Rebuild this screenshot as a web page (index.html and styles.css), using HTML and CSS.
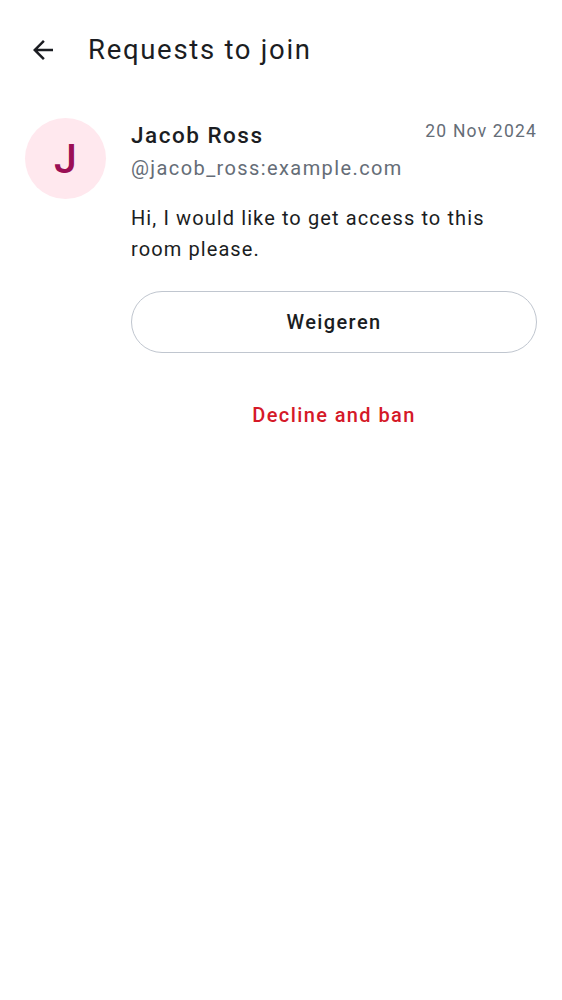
FILE: index.html
```html
<!DOCTYPE html>
<html lang="en">
<head>
<meta charset="utf-8">
<title>Requests to join</title>
<link rel="stylesheet" href="styles.css">
</head>
<body>
<header class="topbar">
  <button class="back" aria-label="Back">
    <svg width="30" height="30" viewBox="0 0 24 24"><path d="M20 11H7.83l5.59-5.59L12 4l-8 8 8 8 1.41-1.41L7.83 13H20v-2z" fill="#1b1d22"/></svg>
  </button>
  <h1 class="title">Requests to join</h1>
</header>
<main class="request">
  <div class="avatar">J</div>
  <div class="content">
    <div class="head">
      <div class="names">
        <div class="name">Jacob Ross</div>
        <div class="handle">@jacob_ross:example.com</div>
      </div>
      <div class="date">20 Nov 2024</div>
    </div>
    <p class="message">Hi, I would like to get access to this room please.</p>
    <button class="outline">Weigeren</button>
    <button class="danger">Decline and ban</button>
  </div>
</main>
</body>
</html>
```

FILE: styles.css
```css
* { box-sizing: border-box; }
html, body { margin: 0; padding: 0; background: #fff; }
body {
  font-family: Roboto, "Noto Sans", sans-serif;
  color: #1b1d22;
  width: 562px;
  height: 1000px;
}
.topbar {
  display: flex;
  align-items: center;
  height: 100px;
  padding: 0 0 0 28px;
}
.back {
  border: none;
  background: none;
  padding: 0;
  width: 30px;
  height: 30px;
  display: flex;
  margin-right: 30px;
}
.title {
  margin: 0;
  font-size: 27.5px;
  font-weight: 400;
  letter-spacing: 1.7px;
  line-height: 36px;
}
.request {
  display: flex;
  padding: 18px 25px 0 25px;
  gap: 25px;
}
.avatar {
  flex: none;
  width: 81px;
  height: 81px;
  border-radius: 50%;
  background: #ffe8ee;
  color: #9b0f55;
  font-size: 41px;
  font-weight: 500;
  display: flex;
  align-items: center;
  justify-content: center;
}
.content {
  flex: 1;
  display: flex;
  flex-direction: column;
}
.head {
  display: flex;
  justify-content: space-between;
  align-items: flex-start;
}
.name {
  font-size: 22.5px;
  font-weight: 500;
  line-height: 32px;
  letter-spacing: 1.5px;
  margin-top: 1px;
}
.handle {
  font-size: 20px;
  color: #656d77;
  line-height: 30px;
  margin-top: 2px;
  letter-spacing: 1.4px;
}
.date {
  font-size: 17.5px;
  color: #656d77;
  line-height: 26px;
  letter-spacing: 1.2px;
}
.message {
  margin: 20px 0 0 0;
  font-size: 20px;
  line-height: 31px;
  letter-spacing: 1.1px;
}
.outline {
  margin-top: 26px;
  height: 62px;
  border: 1.3px solid #c0c6cf;
  border-radius: 31px;
  background: #fff;
  font-family: inherit;
  font-size: 20px;
  font-weight: 500;
  color: #1b1d22;
  letter-spacing: 1.4px;
}
.danger {
  margin-top: 31px;
  height: 62px;
  border: none;
  background: none;
  font-family: inherit;
  font-size: 20px;
  font-weight: 500;
  color: #d51928;
  letter-spacing: 1.4px;
}
```
